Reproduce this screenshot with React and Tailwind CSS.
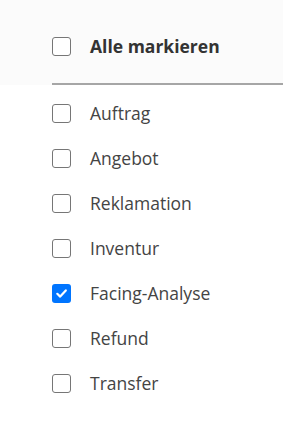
import React from "react";

const items = [
  { label: "Auftrag", checked: false },
  { label: "Angebot", checked: false },
  { label: "Reklamation", checked: false },
  { label: "Inventur", checked: false },
  { label: "Facing-Analyse", checked: true },
  { label: "Refund", checked: false },
  { label: "Transfer", checked: false },
];

function Box({ checked }) {
  if (checked) {
    return (
      <span className="flex h-[19px] w-[19px] shrink-0 items-center justify-center rounded-[3px] bg-[#0075ff]">
        <svg width="13" height="13" viewBox="0 0 13 13" fill="none">
          <path d="M2.3 6.8 L5.2 9.6 L10.8 3.4" stroke="white" strokeWidth="2.2" strokeLinecap="round" strokeLinejoin="round" />
        </svg>
      </span>
    );
  }
  return <span className="block h-[19px] w-[19px] shrink-0 rounded-[3px] border-[1.5px] border-[#767676] bg-white" />;
}

export default function App() {
  return (
    <div className="h-[434px] w-[283px] bg-white" style={{ fontFamily: '"Open Sans", "Noto Sans", sans-serif' }}>
      <div className="bg-[#fbfbfb] pl-[52px] pt-[37px]">
        <div className="flex h-[19px] items-center gap-[19px]">
          <Box checked={false} />
          <span className="text-[17.5px] font-bold text-[#333]">Alle markieren</span>
        </div>
        <div className="mt-[27px] h-[2px] bg-[#a6a6a6]" />
      </div>
      <div className="flex flex-col gap-[26px] pl-[52px] pt-[19px]">
        {items.map((it) => (
          <div key={it.label} className="flex h-[19px] items-center gap-[19px]">
            <Box checked={it.checked} />
            <span className="text-[17.5px] text-[#444]">{it.label}</span>
          </div>
        ))}
      </div>
    </div>
  );
}
